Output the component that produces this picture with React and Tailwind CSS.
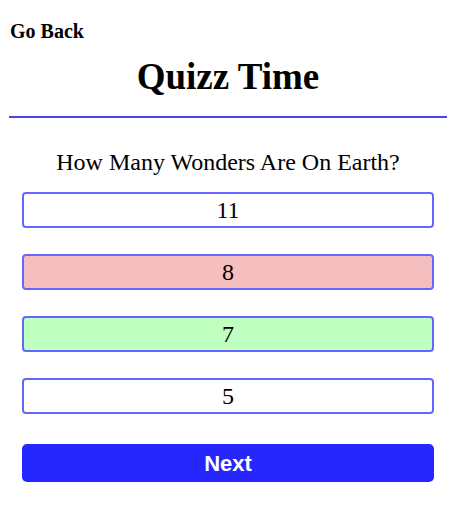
export default function App() {
  const opts = [
    { t: "11", bg: "bg-white" },
    { t: "8", bg: "bg-[#f5bfbf]" },
    { t: "7", bg: "bg-[#bfffbf]" },
    { t: "5", bg: "bg-white" },
  ];
  return (
    <div className="w-[456px] h-[516px] bg-white text-black font-['Liberation_Serif',serif]">
      <div className="pt-[20px] pl-[10px] text-[20px] font-bold leading-[23px]">Go Back</div>
      <h1 className="mt-[12px] text-center text-[37px] font-bold leading-[44px]">Quizz Time</h1>
      <div className="mx-[9px] mt-[17px] h-[2px] bg-[#4b45e3]" />
      <p className="mt-[30px] text-center text-[24px] leading-[28px]">How Many Wonders Are On Earth?</p>
      <div className="mx-[22px] mt-[16px] flex flex-col gap-[26px]">
        {opts.map((o) => (
          <div
            key={o.t}
            className={`h-[36px] flex items-center justify-center rounded-[4px] border-2 border-[#6666ff] text-[24px] leading-[28px] ${o.bg}`}
          >
            {o.t}
          </div>
        ))}
      </div>
      <div className="mx-[22px] mt-[30px] h-[38px] rounded-[5px] bg-[#2626ff] flex items-center justify-center text-white text-[22px] font-bold font-['Liberation_Sans',sans-serif]">
        Next
      </div>
    </div>
  );
}
